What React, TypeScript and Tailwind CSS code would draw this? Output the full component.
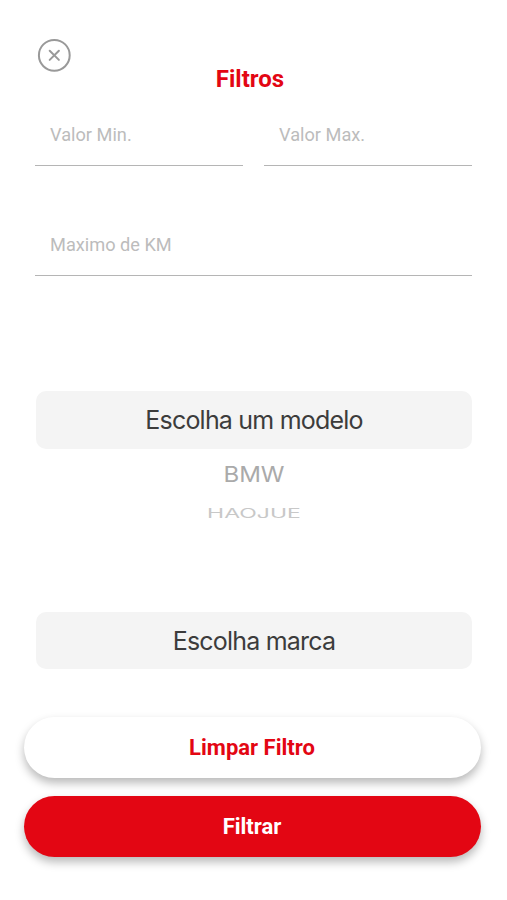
import React from "react";

function Field({ label, className }: { label: string; className: string }) {
  return (
    <div className={`flex items-center border-b border-[#b5b5b5] pl-[15px] text-[18.2px] text-[#bcbcbc] ${className}`}>
      <span className="block leading-6">{label}</span>
    </div>
  );
}

export default function App() {
  return (
    <main className="flex h-[900px] w-[507px] flex-col overflow-hidden bg-white font-[Roboto,sans-serif]">
      <header className="relative flex h-[105px] justify-center pr-[7px] pt-[63px]">
        <button aria-label="Fechar" className="absolute left-[37px] top-[38px]">
          <svg width="34" height="34" viewBox="0 0 34 34" fill="none" stroke="#999" strokeWidth="2" strokeLinecap="round">
            <circle cx="17.3" cy="17.3" r="15.4" />
            <path d="M12.7 12.7l9.2 9.2M21.9 12.7l-9.2 9.2" />
          </svg>
        </button>
        <h1 className="text-[24px] font-bold leading-8 text-[#e30613]">Filtros</h1>
      </header>

      <div className="mx-[35px] flex gap-[21px]">
        <Field label="Valor Min." className="h-[61px] w-[208px]" />
        <Field label="Valor Max." className="h-[61px] w-[208px]" />
      </div>
      <Field label="Maximo de KM" className="mx-[35px] mt-[49px] h-[61px]" />

      <section className="ml-[36px] mr-[35px] mt-[115px] flex h-[138px] flex-col items-center font-[Inter,sans-serif]">
        <div className="flex h-[58px] w-full items-center justify-center rounded-[10px] bg-[#f4f4f4] pt-[2px] text-[25px] tracking-[-0.8px] text-[#3c3c3c]">Escolha um modelo</div>
        <span className="mt-[11px] scale-y-90 text-[24px] leading-[30px] text-[#aaa]">BMW</span>
        <span className="mt-[9px] scale-y-[.54] text-[23px] leading-[30px] text-[#c8c8c8]">HAOJUE</span>
      </section>

      <div className="ml-[36px] mr-[35px] mt-[83px] flex h-[57px] items-center justify-center rounded-[10px] bg-[#f4f4f4] pt-[3px] font-[Inter,sans-serif] text-[25px] tracking-[-0.8px] text-[#3c3c3c]">Escolha marca</div>

      <footer className="ml-[24px] mr-[26px] mt-[48px] flex flex-col gap-[18px] text-[22px] font-bold">
        <button className="h-[61px] rounded-full bg-white pr-px text-[#e30613] shadow-[0_5px_10px_rgba(0,0,0,0.28)]">Limpar Filtro</button>
        <button className="h-[61px] rounded-full bg-[#e30613] pr-px text-white shadow-[0_5px_10px_rgba(0,0,0,0.28)]">Filtrar</button>
      </footer>
    </main>
  );
}
